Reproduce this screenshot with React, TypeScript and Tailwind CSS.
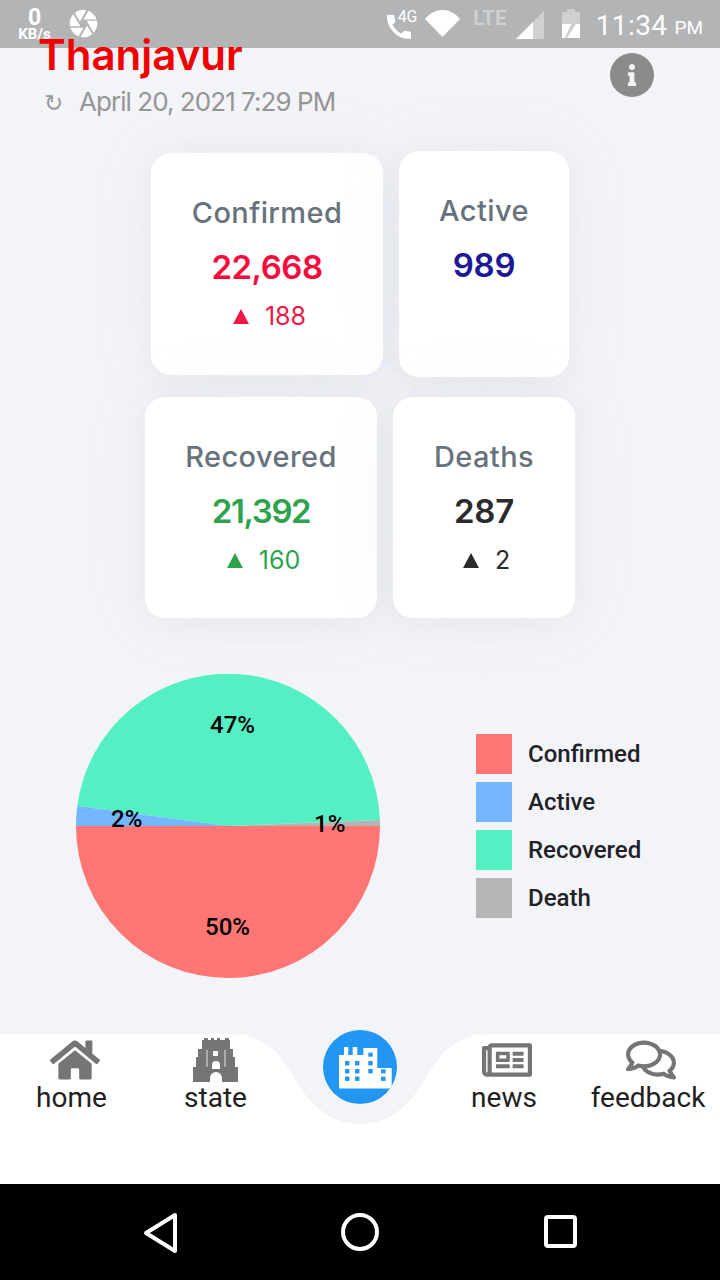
import React from "react";
import { FaHome, FaRegNewspaper, FaRegComments, FaInfo } from "react-icons/fa";
import { MdCall, MdCamera } from "react-icons/md";

const pop = "font-['Inter','Liberation_Sans',sans-serif]";
const rob = "font-['Roboto','Liberation_Sans',sans-serif]";

function StatCard({ title, value, delta, w, h, color, deltaColor, track }: { title: string; value: string; delta?: string; w: string; h: string; color: string; deltaColor?: string; track: string }) {
  return (
    <div className={`flex flex-col items-center rounded-[20px] bg-white pt-[41px] shadow-[0_4px_30px_rgba(175,180,198,0.15),0_0_70px_rgba(185,190,205,0.08)] ${w} ${h}`}>
      <div className={`${pop} text-[29px] leading-[38px] font-medium tracking-[0.4px] text-[#68727c]`}>{title}</div>
      <div className={`${pop} mt-[15px] text-[33px] leading-[40px] font-semibold ${track} ${color}`}>{value}</div>
      {delta && (
        <div className={`${pop} mt-[13px] ml-[5px] flex items-center gap-[16px] text-[25px] leading-[32px] ${deltaColor}`}>
          <span className="h-0 w-0 border-x-[8px] border-b-[15px] border-x-transparent border-b-current" />
          <span>{delta}</span>
        </div>
      )}
    </div>
  );
}

function LegendItem({ color, label }: { color: string; label: string }) {
  return (
    <div className="flex items-center gap-4">
      <div className={`h-10 w-9 ${color}`} />
      <div className={`${rob} text-[24px] leading-none font-medium text-[#212226]`}>{label}</div>
    </div>
  );
}

function Temple() {
  return (
    <svg width="48" height="48" viewBox="0 0 48 48" className="-mt-[1px]">
      <path
        d="M12 2h4v2h3V2h3v2h3V2h3v2h5V2h4v2h1v9h3v8h2v10h3v15H30V42a6 6 0 0 0-12 0v4H1V31h3V21h2v-8h4V4h2z"
        fill="#757575"
      />
      <rect x="21" y="15" width="5" height="5" fill="#fff" />
      <path d="M20 33v-4a4 4 0 0 1 8 0v4z" fill="#fff" />
      <path d="M15 14v17M33 14v17" stroke="#c4c4c4" strokeWidth="1.4" />
    </svg>
  );
}

function CityIcon() {
  return (
    <svg width="74" height="74" viewBox="0 0 74 74">
      <path d="M16 25H21V17H25.3V25H29.7V17H34.3V25H40.3V18H54.3V38H68.7V58.5H16Z" fill="#fff" />
      <g fill="#2196f3">
        <rect x="22" y="31" width="4.4" height="4.4" />
        <rect x="32" y="31" width="4.4" height="4.4" />
        <rect x="22" y="39" width="4.4" height="4.4" />
        <rect x="32" y="39" width="4.4" height="4.4" />
        <rect x="22" y="46.5" width="4.4" height="4.4" />
        <rect x="32" y="46.5" width="4.4" height="4.4" />
        <rect x="45.3" y="22.7" width="4.4" height="4" />
        <rect x="45.3" y="31" width="4.4" height="4.4" />
        <rect x="45.3" y="39" width="4.4" height="4.4" />
        <rect x="58" y="39.3" width="4.6" height="4" />
        <rect x="58" y="46.7" width="4.6" height="4.2" />
      </g>
    </svg>
  );
}

function NavItem({ label, icon, w, iconShift }: { label: string; icon: React.ReactNode; w: string; iconShift?: string }) {
  return (
    <div className={`flex flex-col items-center ${w}`}>
      <div className={`flex h-[46px] items-center justify-center text-[#757575] ${iconShift ?? ""}`}>{icon}</div>
      <div className={`${rob} -mt-[2px] text-[28px] leading-[34px] text-[#212121]`}>{label}</div>
    </div>
  );
}

export default function App() {
  return (
    <div className="flex h-[1280px] w-[720px] flex-col overflow-hidden bg-[#f3f4f8]">
      {/* status bar */}
      <div className="flex h-12 shrink-0 items-center bg-[#b3b4b6] pr-[17px] text-white">
        <div className={`${rob} ml-[17px] flex w-[35px] flex-col items-center font-bold`}>
          <span className="text-[23px] leading-[20px]">0</span>
          <span className="text-[15px] leading-[13px]">KB/s</span>
        </div>
        <MdCamera className="ml-[15px] -mt-[1px]" size={33} />
        <div className="flex-1" />
        <MdCall size={32} className="mt-[5px]" />
        <span className={`${rob} -ml-[17px] -mt-[14px] text-[16px] leading-none tracking-[-0.2px]`}>4G</span>
        <svg width="35" height="27" viewBox="0 0 35 27" className="ml-[8px] mt-[-1px]"><path d="M0 9C10-3 25-3 35 9L17.5 27z" fill="#fff" /></svg>
        <span className={`${rob} ml-[13px] -mt-[13px] text-[20px] leading-none font-bold tracking-[0.4px] text-[#cfd0d1]`}>LTE</span>
        <svg width="28" height="28" viewBox="0 0 28 28" className="ml-[9px] mt-[2px]"><path d="M0 28 28 0v28z" fill="#cfd0d1" /><path d="M0 28 17 11v17z" fill="#fff" /></svg>
        <svg width="20" height="29" viewBox="0 0 20 29" className="ml-[17px] mt-[-1px]"><path d="M6 0h8v3h5v26H1V3h5z" fill="#cfd0d1" /><path d="M1 15h9l-6 14H1zM19 15v14H6l7-11 2-3z" fill="#fff" /></svg>
        <span className={`${rob} ml-[15px] mt-[3px] text-[28px] leading-none tracking-[0.4px]`}>11:34</span>
        <span className={`${rob} ml-[7px] mt-[6px] text-[19px] leading-none`}>PM</span>
      </div>

      {/* header */}
      <div className="relative shrink-0">
        <div className={`${pop} relative -mt-[15px] ml-[38px] text-[42px] leading-[44px] font-semibold text-[#f20000]`}>Thanjavur</div>
        <div className="mt-[8px] ml-[44px] flex items-center">
          <span className="mt-[3px] w-[17px] font-['DejaVu_Sans',sans-serif] text-[23px] leading-none text-[#999999]">↻</span>
          <span className={`${pop} ml-[18px] text-[26px] leading-[34px] tracking-[-0.95px] text-[#959595]`}>April 20, 2021 7:29 PM</span>
        </div>
        <div className="absolute top-[5px] right-[66px] flex h-11 w-11 items-center justify-center rounded-full bg-[#8b8b8b] text-[#f3f4f8]">
          <FaInfo size={22} />
        </div>
      </div>

      {/* cards */}
      <div className="mt-[32px] flex h-[226px] shrink-0 items-center justify-center gap-4">
        <StatCard title="Confirmed" value="22,668" delta="188" w="w-[232px]" h="h-[222px]" color="text-[#f50c3d]" deltaColor="text-[#ee1744]" track="tracking-[-0.5px]" />
        <StatCard title="Active" value="989" w="w-[170px]" h="h-[226px]" color="text-[#1c1896]" track="tracking-[-0.2px]" />
      </div>
      <div className="mt-[20px] flex h-[221px] shrink-0 justify-center gap-4">
        <StatCard title="Recovered" value="21,392" delta="160" w="w-[232px]" h="h-[221px]" color="text-[#2da44c]" deltaColor="text-[#2da44c]" track="tracking-[-1.4px]" />
        <StatCard title="Deaths" value="287" delta="2" w="w-[182px]" h="h-[221px]" color="text-[#2b2b2b]" deltaColor="text-[#2b2b2b]" track="tracking-[-0.2px]" />
      </div>

      {/* chart */}
      <div className="mt-[56px] flex h-[304px] shrink-0 items-center">
        <div className="relative ml-[76px] h-[304px] w-[304px]">
          <svg width="304" height="304" viewBox="0 0 304 304">
            <path d="M0 152A152 152 0 0 0 304 152z" fill="#ff7675" />
            <path d="M152 152 304 152A152 152 0 0 0 303.9 146z" fill="#b5b5b5" />
            <path d="M152 152 303.9 146A152 152 0 0 0 1.3 132z" fill="#55efc4" />
            <path d="M152 152 1.3 132A152 152 0 0 0 0 152z" fill="#74b7ff" />
          </svg>
          <span className={`${rob} absolute top-[39px] left-[134px] text-[24px] leading-none font-medium text-black`}>47%</span>
          <span className={`${rob} absolute top-[133px] left-[35px] text-[24px] leading-none font-medium text-black`}>2%</span>
          <span className={`${rob} absolute top-[138px] left-[238px] text-[24px] leading-none font-medium text-black`}>1%</span>
          <span className={`${rob} absolute top-[241px] left-[129px] text-[24px] leading-none font-medium text-black`}>50%</span>
        </div>
        <div className="ml-[96px] flex flex-col gap-2">
          <LegendItem color="bg-[#ff7675]" label="Confirmed" />
          <LegendItem color="bg-[#74b7ff]" label="Active" />
          <LegendItem color="bg-[#55efc4]" label="Recovered" />
          <LegendItem color="bg-[#b5b5b5]" label="Death" />
        </div>
      </div>

      {/* bottom nav */}
      <div className="relative mt-[56px] flex h-[150px] shrink-0 items-start bg-white pt-[3px]">
        <svg width="300" height="92" viewBox="0 0 300 92" className="absolute top-0 left-[210px]">
          <path d="M0 0H20C58 0 72 24 88 50C103 76 125 90 150 90C175 90 197 76 212 50C228 24 242 0 280 0H300V-2H0z" fill="#f3f4f8" />
        </svg>
        <NavItem label="home" w="w-[143px]" iconShift="ml-[6px]" icon={<FaHome size={50} />} />
        <NavItem label="state" w="w-[145px]" icon={<Temple />} />
        <div className="relative flex w-[144px] justify-center">
          <div className="-mt-[7px] h-[74px] w-[74px] overflow-hidden rounded-full bg-[#2196f3]">
            <CityIcon />
          </div>
        </div>
        <NavItem label="news" w="w-[144px]" iconShift="ml-[6px]" icon={<FaRegNewspaper size={50} />} />
        <NavItem label="feedback" w="w-[144px]" iconShift="ml-[6px]" icon={<FaRegComments size={50} />} />
      </div>

      {/* system nav */}
      <div className="flex h-[96px] shrink-0 items-center bg-black">
        <svg width="720" height="96" viewBox="0 0 720 96" fill="none" stroke="#fff" strokeWidth="4">
          <path d="M175 31v36l-29-18z" strokeLinejoin="round" />
          <circle cx="360" cy="48" r="17" />
          <rect x="546" y="33" width="29" height="29" rx="2" />
        </svg>
      </div>
    </div>
  );
}
